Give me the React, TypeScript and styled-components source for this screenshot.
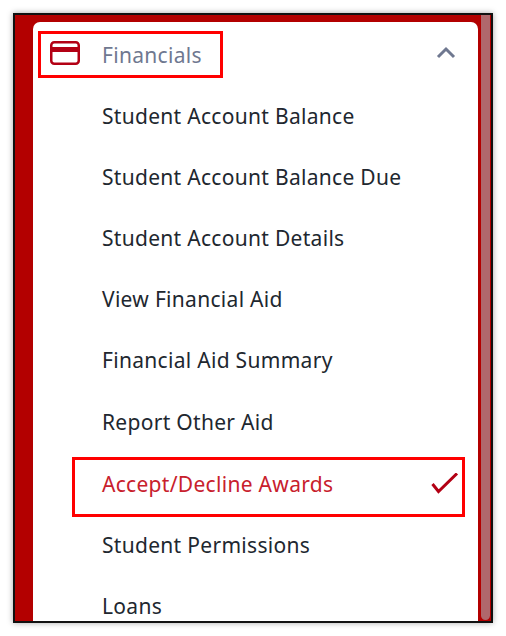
import styled, { createGlobalStyle } from "styled-components";

const GlobalStyle = createGlobalStyle`
    html, body {
        margin: 0;
        padding: 0;
        background: #fff;
    }
`

const Page = styled.div`
    width: 506px;
    height: 636px;
    padding: 13px;
    box-sizing: border-box;
    background: #fff;
    overflow: hidden;
`

const Frame = styled.div`
    width: 480px;
    height: 610px;
    box-sizing: border-box;
    border: 2px solid #111;
    box-shadow: 0 0 6px rgba(0, 0, 0, 0.35);
    background: #b30000;
    display: flex;
    padding: 7px 0 0 18px;
    overflow: hidden;
    font-family: "Noto Sans", sans-serif;
`

const Card = styled.div`
    width: 445px;
    flex-shrink: 0;
    background: #fff;
    border-radius: 7px 7px 0 0;
    padding-top: 9px;
    height: 640px;
`

const Header = styled.div`
    display: flex;
    align-items: center;
    height: 47px;
    position: relative;
`

const HeaderBox = styled.div`
    width: 185px;
    height: 47px;
    margin-left: 5px;
    box-sizing: border-box;
    border: 3px solid #f00;
    display: flex;
    align-items: center;
    padding-left: 9px;
    gap: 22px;
`

const CardIcon = styled.svg`
    flex-shrink: 0;
    margin-bottom: 3px;
`

const HeaderText = styled.span`
    color: #6f7890;
    font-size: 21px;
    letter-spacing: 0.3px;
`

const Chevron = styled.svg`
    position: absolute;
    left: 403px;
    top: 15px;
`

const Menu = styled.div`
    display: flex;
    flex-direction: column;
    padding-top: 7px;
`

const Item = styled.div<{ $active?: boolean }>`
    height: ${p => (p.$active ? "60px" : "61.2px")};
    box-sizing: border-box;
    display: flex;
    align-items: center;
    justify-content: space-between;
    margin: ${p => (p.$active ? "5px 0 -2.8px 39px" : "0 0 0 69px")};
    width: ${p => (p.$active ? "393px" : "auto")};
    padding: ${p => (p.$active ? "0 3px 6px 27px" : "0")};
    border: ${p => (p.$active ? "3px solid #f00" : "none")};
    color: ${p => (p.$active ? "#c8202c" : "#21272f")};
    font-size: 21px;
    letter-spacing: 0.3px;
`

const Scrollbar = styled.div`
    width: 9px;
    margin: -7px 0 1px 3px;
    background: #b0686c;
    border-radius: 0 0 5px 5px;
    flex-shrink: 0;
`

const items = [
    "Student Account Balance",
    "Student Account Balance Due",
    "Student Account Details",
    "View Financial Aid",
    "Financial Aid Summary",
    "Report Other Aid",
]

export default function App() {
    return (
        <Page>
            <GlobalStyle />
            <Frame>
                <Card>
                    <Header>
                        <HeaderBox>
                            <CardIcon width="30" height="24" viewBox="0 0 30 24" fill="none">
                                <rect x="1.25" y="1.25" width="27.5" height="21.5" rx="3" stroke="#b30014" strokeWidth="2.5" />
                                <rect x="1.5" y="6" width="27" height="5" fill="#b30014" />
                            </CardIcon>
                            <HeaderText>Financials</HeaderText>
                        </HeaderBox>
                        <Chevron width="20" height="13" viewBox="0 0 20 13" fill="none">
                            <path d="M2 11L10 3L18 11" stroke="#6f7890" strokeWidth="3" />
                        </Chevron>
                    </Header>
                    <Menu>
                        {items.map(text => (
                            <Item key={text}>{text}</Item>
                        ))}
                        <Item $active>
                            Accept/Decline Awards
                            <svg width="28" height="22" viewBox="0 0 28 22" fill="none">
                                <path d="M1.5 11L7.5 18.5L26 0.5" stroke="#b30014" strokeWidth="3" />
                            </svg>
                        </Item>
                        <Item>Student Permissions</Item>
                        <Item>Loans</Item>
                    </Menu>
                </Card>
                <Scrollbar />
            </Frame>
        </Page>
    )
}
